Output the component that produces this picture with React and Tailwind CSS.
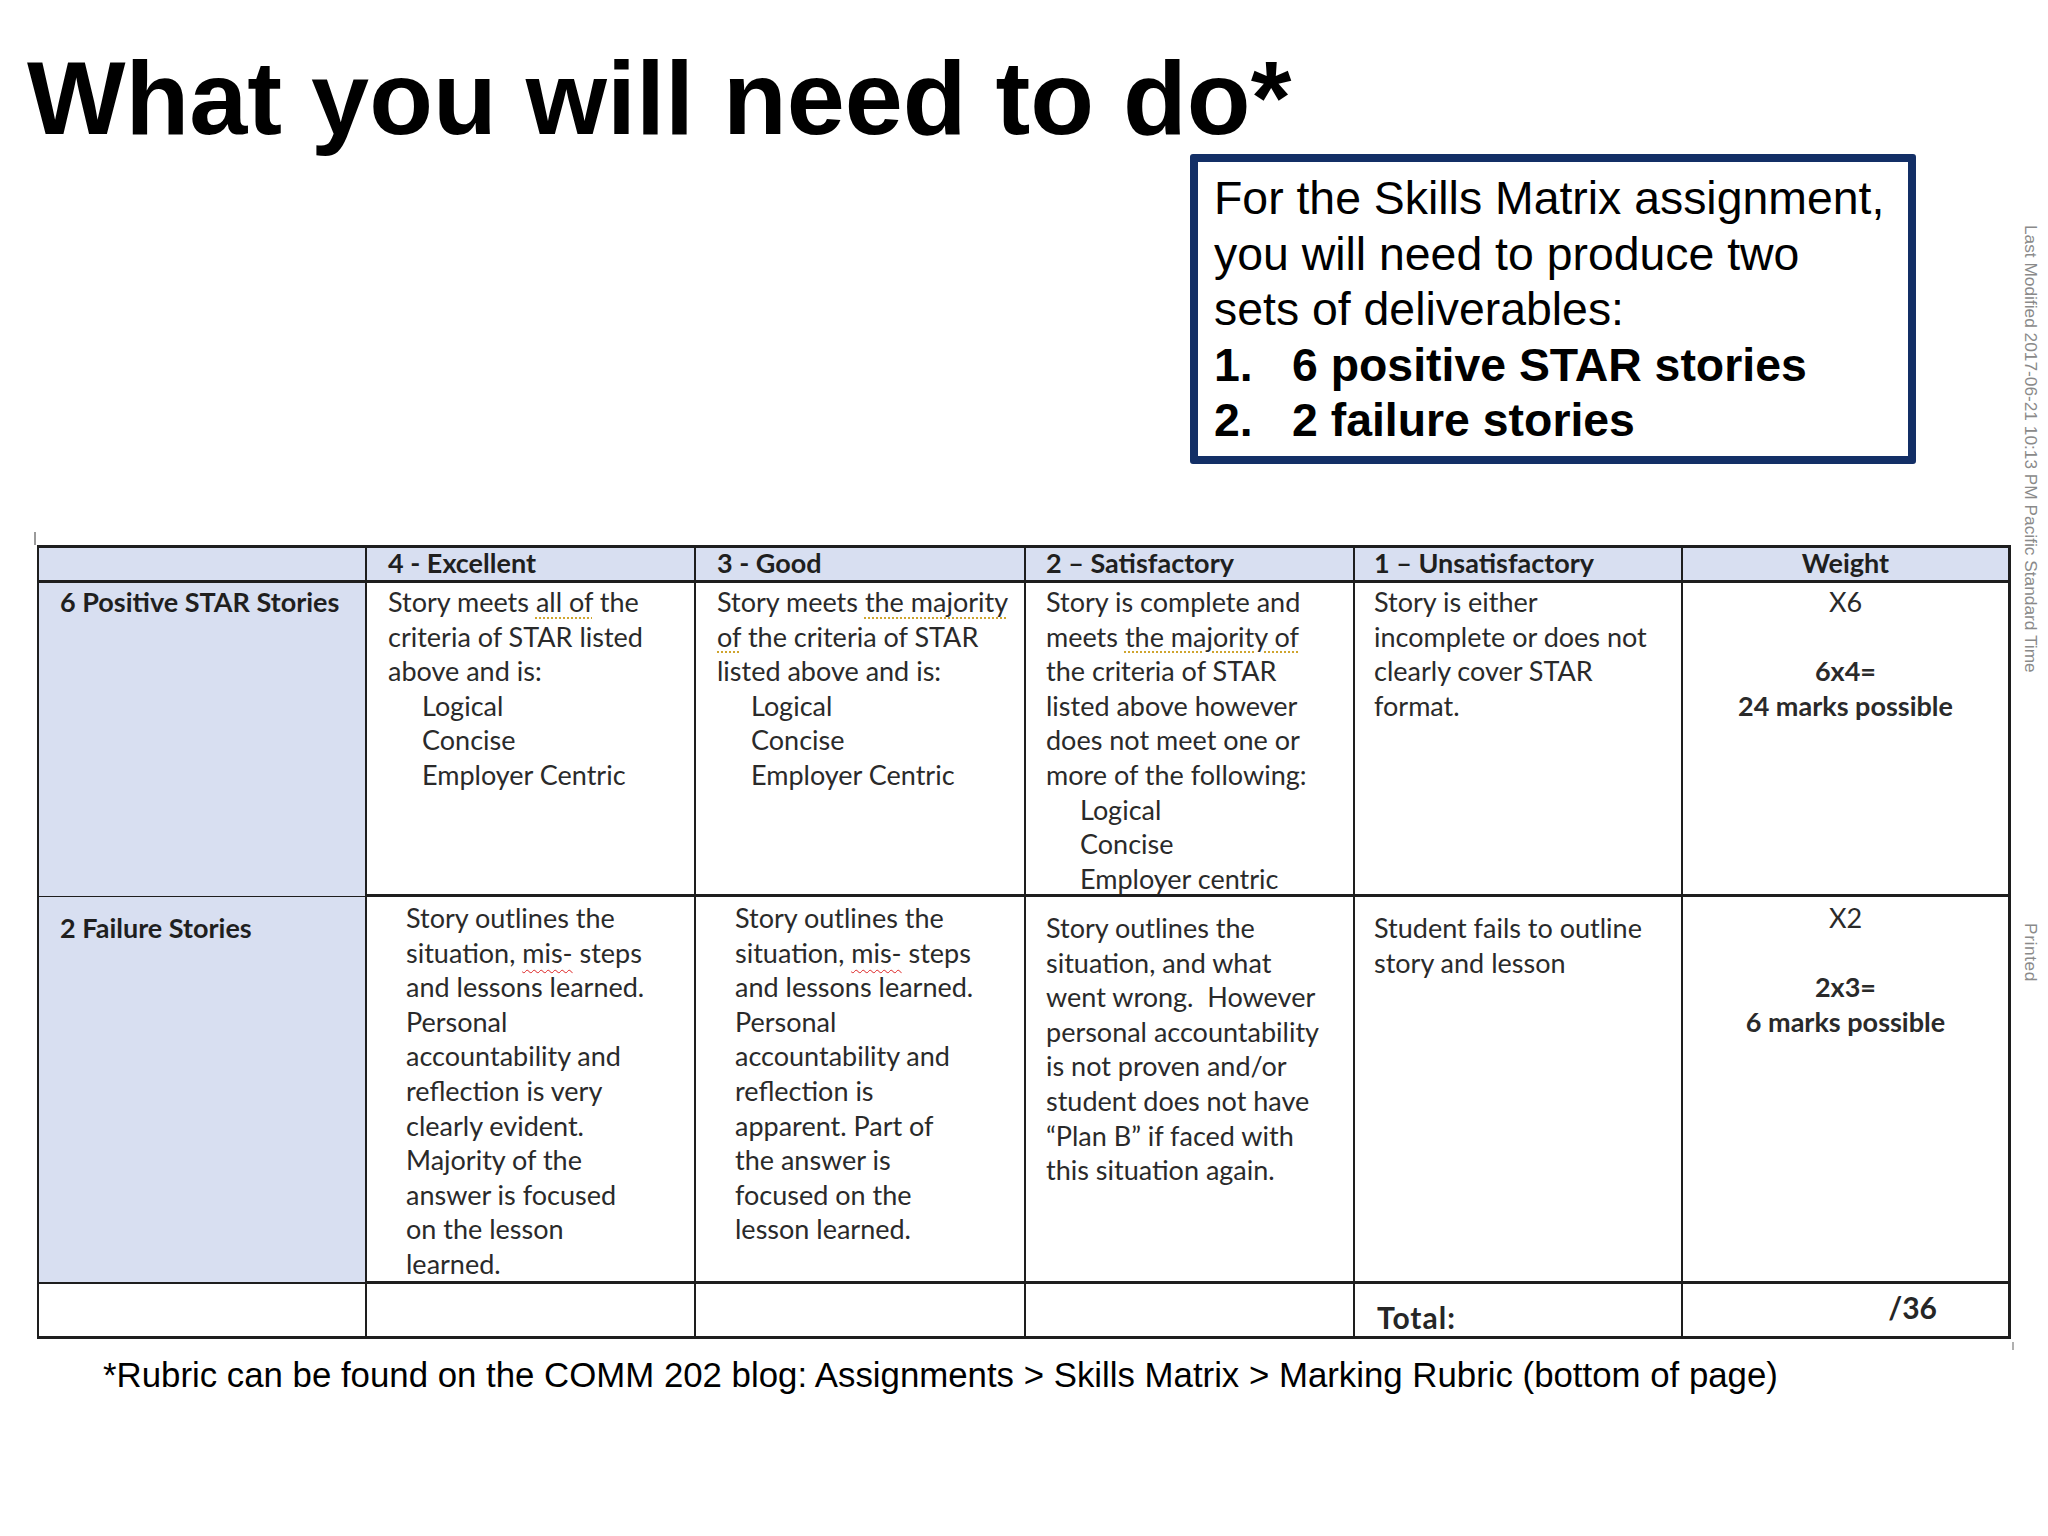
const dots = "underline decoration-dotted decoration-[#cfa52e] decoration-2 underline-offset-[5px]";
const wavy = "underline decoration-wavy decoration-[#d22] decoration-1 underline-offset-[6px]";

function Line({ children, indent, bold }) {
  return (
    <div
      className={`h-[34.6px] leading-[34.6px] whitespace-nowrap ${indent ? "pl-[34px]" : ""} ${
        bold ? "font-bold" : ""
      }`}
    >
      {children}
    </div>
  );
}

function Cell({ children, className = "", last }) {
  return (
    <div className={`${last ? "" : "border-r-2 border-[#1e1e1e]"} ${className}`}>
      {children}
    </div>
  );
}

function WeightCell({ times, calc, marks, className = "" }) {
  return (
    <Cell last className={`text-center ${className}`}>
      <Line>{times}</Line>
      <Line>{"\u00a0"}</Line>
      <Line bold>{calc}</Line>
      <Line bold>{marks}</Line>
    </Cell>
  );
}

const cols = "grid grid-cols-[328px_329px_330px_329px_328px_325px]";

function RubricTable() {
  return (
    <div className="relative ml-[37px] mt-[81px] w-[1974px] border-t-[3px] border-l-2 border-r-[3px] border-[#1e1e1e] font-['Lato',sans-serif] text-[27px] text-[#2a2a2a]">
      <div className={`${cols} h-[35px] border-b-[3px] border-[#1e1e1e] bg-[#d8dff1] font-bold leading-[30px] text-[#1f1f1f]`}>
        <Cell />
        <Cell className="pl-[21px]">4 - Excellent</Cell>
        <Cell className="pl-[21px]">3 - Good</Cell>
        <Cell className="pl-[20px]">2 – Satisfactory</Cell>
        <Cell className="pl-[19px]">1 – Unsatisfactory</Cell>
        <Cell last className="text-center">Weight</Cell>
      </div>

      <div className={`${cols} h-[314px] border-b-[3px] border-[#1e1e1e]`}>
        <Cell className="bg-[#d8dff1] pl-[21px] pt-[2px] text-[#1f1f1f]">
          <Line bold>6 Positive STAR Stories</Line>
        </Cell>
        <Cell className="pl-[21px] pt-[2px]">
          <Line>
            Story meets <span className={dots}>all of</span> the
          </Line>
          <Line>criteria of STAR listed</Line>
          <Line>above and is:</Line>
          <Line indent>Logical</Line>
          <Line indent>Concise</Line>
          <Line indent>Employer Centric</Line>
        </Cell>
        <Cell className="pl-[21px] pt-[2px]">
          <Line>
            Story meets <span className={dots}>the majority</span>
          </Line>
          <Line>
            <span className={dots}>of</span> the criteria of STAR
          </Line>
          <Line>listed above and is:</Line>
          <Line indent>Logical</Line>
          <Line indent>Concise</Line>
          <Line indent>Employer Centric</Line>
        </Cell>
        <Cell className="pl-[20px] pt-[2px]">
          <Line>Story is complete and</Line>
          <Line>
            meets <span className={dots}>the majority of</span>
          </Line>
          <Line>the criteria of STAR</Line>
          <Line>listed above however</Line>
          <Line>does not meet one or</Line>
          <Line>more of the following:</Line>
          <Line indent>Logical</Line>
          <Line indent>Concise</Line>
          <Line indent>Employer centric</Line>
        </Cell>
        <Cell className="pl-[19px] pt-[2px]">
          <Line>Story is either</Line>
          <Line>incomplete or does not</Line>
          <Line>clearly cover STAR</Line>
          <Line>format.</Line>
        </Cell>
        <WeightCell times="X6" calc="6x4=" marks="24 marks possible" className="pt-[2px]" />
      </div>

      <div className={`${cols} h-[387px] border-b-[3px] border-[#1e1e1e]`}>
        <Cell className="bg-[#d8dff1] pl-[21px] pt-[14px] text-[#1f1f1f]">
          <Line bold>2 Failure Stories</Line>
        </Cell>
        <Cell className="pl-[39px] pt-[4px]">
          <Line>Story outlines the</Line>
          <Line>
            situation, <span className={wavy}>mis-</span> steps
          </Line>
          <Line>and lessons learned.</Line>
          <Line>Personal</Line>
          <Line>accountability and</Line>
          <Line>reflection is very</Line>
          <Line>clearly evident.</Line>
          <Line>Majority of the</Line>
          <Line>answer is focused</Line>
          <Line>on the lesson</Line>
          <Line>learned.</Line>
        </Cell>
        <Cell className="pl-[39px] pt-[4px]">
          <Line>Story outlines the</Line>
          <Line>
            situation, <span className={wavy}>mis-</span> steps
          </Line>
          <Line>and lessons learned.</Line>
          <Line>Personal</Line>
          <Line>accountability and</Line>
          <Line>reflection is</Line>
          <Line>apparent. Part of</Line>
          <Line>the answer is</Line>
          <Line>focused on the</Line>
          <Line>lesson learned.</Line>
        </Cell>
        <Cell className="pl-[20px] pt-[14px]">
          <Line>Story outlines the</Line>
          <Line>situation, and what</Line>
          <Line>went wrong.{"\u00a0"} However</Line>
          <Line>personal accountability</Line>
          <Line>is not proven and/or</Line>
          <Line>student does not have</Line>
          <Line>“Plan B” if faced with</Line>
          <Line>this situation again.</Line>
        </Cell>
        <Cell className="pl-[19px] pt-[14px]">
          <Line>Student fails to outline</Line>
          <Line>story and lesson</Line>
        </Cell>
        <WeightCell times="X2" calc="2x3=" marks="6 marks possible" className="pt-[4px]" />
      </div>

      <div className={`${cols} h-[55px] border-b-[3px] border-[#1e1e1e] font-bold text-[#262626]`}>
        <Cell />
        <Cell />
        <Cell />
        <Cell />
        <Cell className="flex items-end pl-[22px] text-[30px] leading-[38px] tracking-[1px]">Total:</Cell>
        <Cell last className="flex items-center justify-end pb-[6px] pr-[71px] text-[30px]">
          /36
        </Cell>
      </div>

      <div className="absolute left-[-5px] top-[-16px] h-[13px] w-[2px] bg-[#9a9a9a]" />
      <div className="absolute bottom-[-11px] right-[-6px] h-[8px] w-[2px] bg-[#b0b0b0]" />
    </div>
  );
}

export default function App() {
  return (
    <div className="relative h-[1536px] w-[2048px] overflow-hidden bg-white font-['Liberation_Sans',Arial,sans-serif] text-black">
      <h1 className="pl-[27px] pt-[46px] text-[104.4px] font-bold leading-[104px]">
        What you will need to do*
      </h1>

      <div className="flex justify-end pr-[132px] pt-[4px]">
        <div className="h-[310px] w-[726px] rounded-[3px] border-[8px] border-[#132f66] pl-[16px] pt-[9px] text-[46.4px] leading-[55.5px]">
          <div>For the Skills Matrix assignment,</div>
          <div>you will need to produce two</div>
          <div>sets of deliverables:</div>
          <div className="font-bold">
            <span className="inline-block w-[78px]">1.</span>6 positive STAR stories
          </div>
          <div className="font-bold">
            <span className="inline-block w-[78px]">2.</span>2 failure stories
          </div>
        </div>
      </div>

      <RubricTable />

      <p className="pl-[103px] pt-[19px] text-[34.8px] leading-[34px]">
        *Rubric can be found on the COMM 202 blog: Assignments &gt; Skills Matrix &gt; Marking Rubric (bottom of page)
      </p>

      <div className="absolute left-[2021px] top-[225px] text-[17.3px] leading-[20px] text-[#8a8a8a] [writing-mode:vertical-rl]">
        Last Modified 2017-06-21 10:13 PM Pacific Standard Time
      </div>
      <div className="absolute left-[2021px] top-[923px] text-[17.3px] leading-[20px] tracking-[0.6px] text-[#8a8a8a] [writing-mode:vertical-rl]">
        Printed
      </div>
    </div>
  );
}
